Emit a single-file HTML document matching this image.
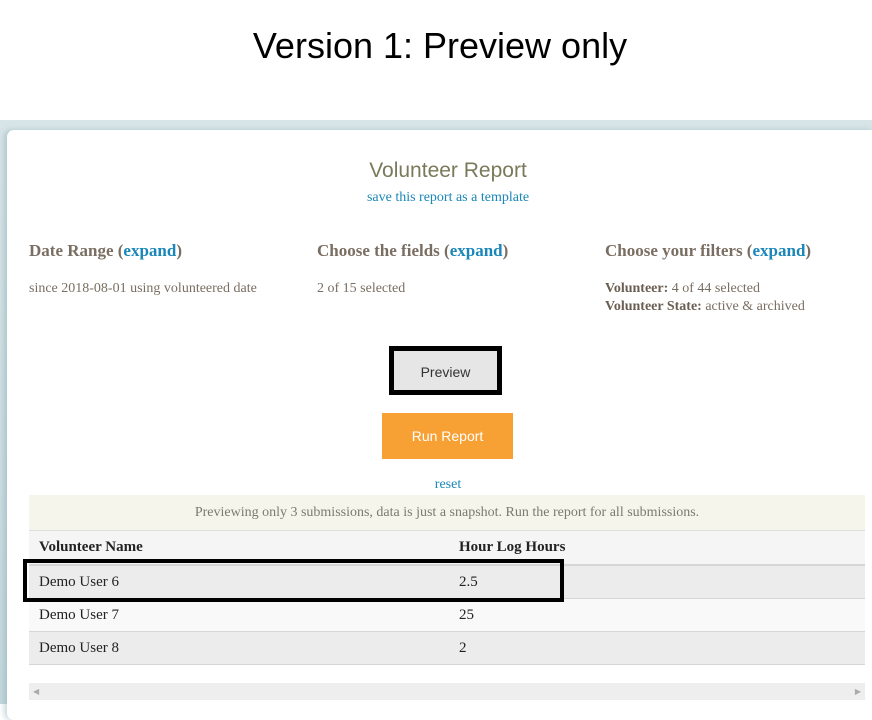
<!DOCTYPE html>
<html><head><meta charset="utf-8"><style>
*{margin:0;padding:0;box-sizing:border-box}
body{width:872px;height:704px;overflow:hidden;background:#fff;position:relative;font-family:"Liberation Serif","DejaVu Serif",serif}
.abs{position:absolute}
h1{position:absolute;top:25px;left:0;width:880px;text-align:center;font:36px "Liberation Sans",sans-serif;color:#000}
.bg{position:absolute;left:0;top:120px;width:872px;height:584px;background:linear-gradient(#d8e5e8,#c5d8dd)}
.card{position:absolute;left:7px;top:130px;width:870px;height:590px;background:#fff;border-radius:7px;box-shadow:-3px 0 6px rgba(120,160,170,.4)}
.t{position:absolute;white-space:nowrap}
.h{font-size:17px;font-weight:bold;color:#7a6e62}
.h b{color:#1a87b8}
.s{font-size:14px;color:#7a6e62}
.s b{color:#6a5e52}
a{color:#1a87b8;text-decoration:none}
.row{position:absolute;left:29px;width:836px;height:33px;border-bottom:1px solid #d6d6d6;font-size:15px;color:#222}
.row span{position:absolute;top:8px}
</style></head><body>
<h1>Version 1: Preview only</h1>
<div class="bg"></div>
<div class="card"></div>
<div class="t" style="left:0;width:896px;text-align:center;top:159px;font:21px 'Liberation Sans',sans-serif;color:#7a7a5a">Volunteer Report</div>
<div class="t" style="left:0;width:896px;text-align:center;top:190px;font-size:14px"><a>save this report as a template</a></div>
<div class="t h" style="left:29px;top:241px">Date Range (<b>expand</b>)</div>
<div class="t h" style="left:317px;top:241px">Choose the fields (<b>expand</b>)</div>
<div class="t h" style="left:605px;top:241px">Choose your filters (<b>expand</b>)</div>
<div class="t s" style="left:29px;top:281px">since 2018-08-01 using volunteered date</div>
<div class="t s" style="left:317px;top:281px">2 of 15 selected</div>
<div class="t s" style="left:605px;top:280px;line-height:18px"><b>Volunteer:</b> 4 of 44 selected<br><b>Volunteer State:</b> active &amp; archived</div>
<div class="abs" style="left:389px;top:346px;width:113px;height:49px;border:5px solid #000;background:#e6e6e6;text-align:center;font:14px/42px 'Liberation Sans',sans-serif;color:#333">Preview</div>
<div class="abs" style="left:382px;top:413px;width:131px;height:46px;background:#f7a033;color:#fff;text-align:center;font:14px/46px 'Liberation Sans',sans-serif">Run Report</div>
<div class="t" style="left:0;width:896px;text-align:center;top:477px;font-size:14px"><a>reset</a></div>
<div class="abs" style="left:29px;top:495px;width:836px;height:36px;background:#f5f5eb;border-bottom:1px solid #ddd;text-align:center;font-size:14px;line-height:36px;color:#7a7a70">Previewing only 3 submissions, data is just a snapshot. Run the report for all submissions.</div>
<div class="row" style="top:531px;height:35px;background:#f5f5f5;font-weight:bold;border-bottom:2px solid #d6d6d6"><span style="left:10px">Volunteer Name</span><span style="left:430px">Hour Log Hours</span></div>
<div class="row" style="top:566px;background:#ececec"><span style="left:10px">Demo User 6</span><span style="left:430px">2.5</span></div>
<div class="row" style="top:599px;background:#f9f9f9"><span style="left:10px">Demo User 7</span><span style="left:430px">25</span></div>
<div class="row" style="top:632px;background:#ececec"><span style="left:10px">Demo User 8</span><span style="left:430px">2</span></div>
<div class="abs" style="left:23px;top:559px;width:541px;height:43px;border:4px solid #000"></div>
<div class="abs" style="left:29px;top:683px;width:836px;height:17px;background:#eee;color:#aaa;font-size:8px;line-height:17px"><span style="position:absolute;left:4px">◀</span><span style="position:absolute;right:4px">▶</span></div>
</body></html>
